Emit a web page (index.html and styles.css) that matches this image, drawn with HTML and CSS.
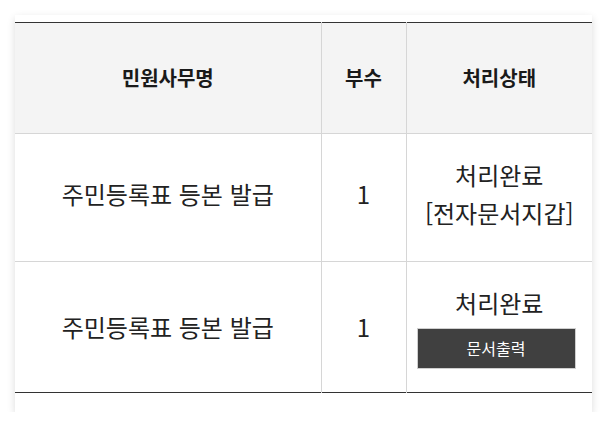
FILE: index.html
```html
<!DOCTYPE html>
<html lang="ko">
<head>
<meta charset="utf-8">
<link rel="stylesheet" href="styles.css">
</head>
<body>
<div class="card">
  <table class="civil">
    <colgroup>
      <col class="c-name">
      <col class="c-count">
      <col class="c-state">
    </colgroup>
    <thead>
      <tr class="head-row">
        <th>민원사무명</th>
        <th>부수</th>
        <th>처리상태</th>
      </tr>
    </thead>
    <tbody>
      <tr class="row-a">
        <td>주민등록표 등본 발급</td>
        <td>1</td>
        <td class="state">처리완료<br>[전자문서지갑]</td>
      </tr>
      <tr class="row-b">
        <td>주민등록표 등본 발급</td>
        <td>1</td>
        <td class="state">
          <div class="state-text">처리완료</div>
          <button class="print-btn" type="button">문서출력</button>
        </td>
      </tr>
    </tbody>
  </table>
</div>
</body>
</html>
```
FILE: styles.css
```css
html, body {
  margin: 0;
  padding: 0;
  background: #ffffff;
}
body {
  padding: 15px 15px 0 15px;
  font-family: "Noto Sans CJK KR", "Noto Sans", sans-serif;
  color: #222;
}
.card {
  width: 577px;
  background: #fff;
  padding: 7px 0 19px 0;
  box-shadow: 0 3px 8px rgba(0, 0, 0, 0.14);
}
.civil {
  width: 577px;
  border-collapse: collapse;
  table-layout: fixed;
  border-top: 1px solid #333;
  border-bottom: 1px solid #333;
}
.c-name { width: 306px; }
.c-count { width: 85px; }
.c-state { width: 186px; }
.civil th,
.civil td {
  border-left: 1px solid #d6d6d6;
  border-top: 1px solid #d6d6d6;
  text-align: center;
  vertical-align: middle;
  padding: 0;
}
.civil th:first-child,
.civil td:first-child {
  border-left: none;
}
.civil th {
  background: #f4f4f4;
  font-size: 20px;
  font-weight: 700;
  color: #1a1a1a;
  height: 108px;
  padding-bottom: 2px;
  border-top: none;
}
.civil td {
  font-size: 24px;
  font-weight: 400;
  line-height: 38px;
}
.row-a td {
  height: 119px;
  padding-bottom: 8px;
}
.row-b td { height: 130px; }
.state-text {
  line-height: 34px;
  margin-bottom: 8px;
}
.print-btn {
  display: block;
  width: 159px;
  height: 41px;
  margin: 0 0 0 10px;
  background: #404040;
  border: 1px solid #cfcfcf;
  color: #fff;
  font-family: "Noto Sans CJK KR", "Noto Sans", sans-serif;
  font-size: 16px;
  padding: 0;
}
```
